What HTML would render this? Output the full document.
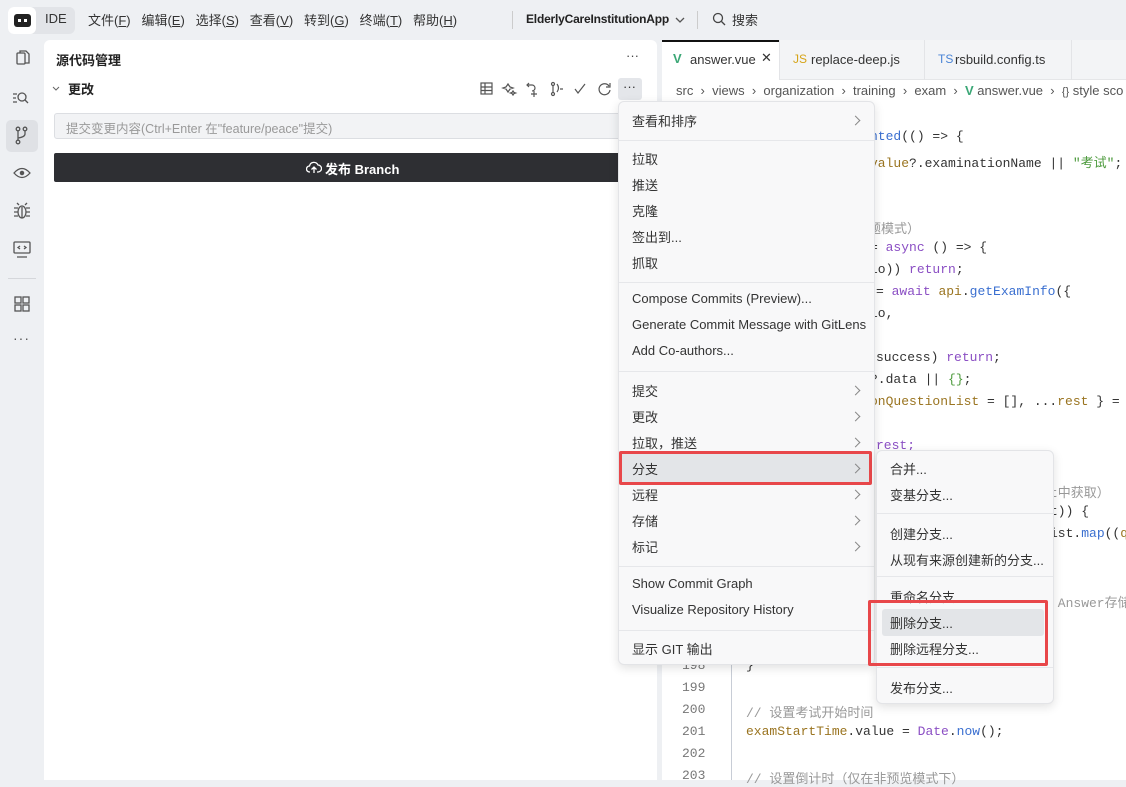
<!DOCTYPE html>
<html><head><meta charset="utf-8"><style>
*{margin:0;padding:0;box-sizing:border-box}
body{width:1126px;height:780px;overflow:hidden;background:#eef0f3;font-family:"Liberation Sans","Noto Sans CJK SC",sans-serif;font-size:13px;color:#333;position:relative}
.a{position:absolute;white-space:pre}
.code{font-family:"Liberation Mono","Noto Sans CJK SC",monospace;font-size:13px;color:#333}
.k{color:#8b4fc4}.f{color:#3a6fd0}.s{color:#4c9a3c}.v{color:#9a7420}.c{color:#999}.n{color:#777}
.menu{position:absolute;background:#f8f8f9;border:1px solid #e3e4e7;border-radius:6px;box-shadow:0 3px 10px rgba(0,0,0,.12)}
.mi{position:absolute;left:13px;font-size:13px;color:#333;white-space:pre;margin-top:-2px}
.ar{position:absolute;width:7px;height:7px;border-right:1.3px solid #888;border-top:1.3px solid #888;transform:rotate(45deg)}
.sep{position:absolute;left:0;right:0;height:1px;background:#e6e7ea}
.ic{position:absolute}
</style></head><body>
<!-- top bar -->
<div class="a" style="left:8px;top:7px;width:67px;height:27px;background:#e2e4e8;border-radius:6px"></div>
<div class="a" style="left:8px;top:7px;width:28px;height:27px;background:#fff;border-radius:6px"></div>
<div class="a" style="left:14px;top:14px;width:17px;height:13px;background:#222;border-radius:3px"></div>
<div class="a" style="left:18px;top:19px;width:3px;height:3px;background:#fff"></div>
<div class="a" style="left:24px;top:19px;width:3px;height:3px;background:#fff"></div>
<div class="a" style="left:45px;top:11px;font-size:13px">IDE</div>
<div class="a" style="left:88px;top:10px">文件(<u>F</u>)&nbsp;&nbsp;&nbsp;编辑(<u>E</u>)&nbsp;&nbsp;&nbsp;选择(<u>S</u>)&nbsp;&nbsp;&nbsp;查看(<u>V</u>)&nbsp;&nbsp;&nbsp;转到(<u>G</u>)&nbsp;&nbsp;&nbsp;终端(<u>T</u>)&nbsp;&nbsp;&nbsp;帮助(<u>H</u>)</div>
<div class="a" style="left:512px;top:11px;width:1px;height:18px;background:#ccc"></div>
<div class="a" style="left:526px;top:12px;font-size:12px;font-weight:bold;color:#222;letter-spacing:-0.2px">ElderlyCareInstitutionApp</div>
<svg class="ic" style="left:675px;top:16px" width="10" height="8"><path d="M1 2l4 4 4-4" stroke="#555" fill="none" stroke-width="1.3"/></svg>
<div class="a" style="left:697px;top:11px;width:1px;height:18px;background:#ccc"></div>
<svg class="ic" style="left:712px;top:12px" width="14" height="14"><circle cx="6" cy="6" r="4.5" stroke="#444" fill="none" stroke-width="1.3"/><path d="M9.5 9.5l3.5 3.5" stroke="#444" stroke-width="1.3"/></svg>
<div class="a" style="left:732px;top:10px">搜索</div>

<!-- activity bar icons -->
<div class="a" style="left:6px;top:120px;width:32px;height:32px;background:#dfe1e5;border-radius:5px"></div>
<svg class="ic" style="left:12px;top:50px" width="20" height="310" fill="none" stroke="#555" stroke-width="1.3">
<rect x="5" y="3" width="8" height="11" rx="1"/><path d="M8 3V1h6l3 3v9h-4"/>
<path d="M1 44h4M1 48h3M1 52h4"/><circle cx="10" cy="47" r="4"/><path d="M13 50l3 3"/>
<circle cx="6" cy="79" r="1.8"/><circle cx="13" cy="79" r="1.8"/><circle cx="6" cy="92" r="1.8"/><path d="M6 81v9M13 81v3q0 3-7 4"/>
<path d="M2 123q8-9 16 0q-8 9-16 0z"/><circle cx="10" cy="123" r="1.6" fill="#555"/>
<ellipse cx="10" cy="162" rx="4" ry="6"/><path d="M7 155l-2-2M13 155l2-2M2 158h4M14 158h4M2 162h4M14 162h4M2 166h4M14 166h4M10 157v11"/>
<rect x="2" y="192" width="16" height="11" rx="1"/><path d="M5 207h10M8 196l-2 1.5 2 1.5M12 196l2 1.5-2 1.5"/>
<rect x="3" y="247" width="6" height="6"/><rect x="11" y="247" width="6" height="6"/><rect x="3" y="255" width="6" height="6"/><rect x="11" y="255" width="6" height="6"/>
</svg>
<div class="a" style="left:8px;top:278px;width:28px;height:1px;background:#d5d7db"></div>
<div class="a" style="left:13px;top:330px;color:#555;font-size:14px;letter-spacing:1px">···</div>

<!-- side panel -->
<div class="a" style="left:44px;top:40px;width:613px;height:740px;background:#fff;border-radius:6px 6px 0 0"></div>
<div class="a" style="left:56px;top:50px;font-weight:bold;font-size:13px;color:#222">源代码管理</div>
<div class="a" style="left:626px;top:48px;color:#444;font-size:13px">···</div>
<svg class="ic" style="left:52px;top:86px" width="8" height="6"><path d="M1 1l3 3 3-3" stroke="#666" fill="none"/></svg>
<div class="a" style="left:68px;top:79px;font-size:13px;color:#222;font-weight:bold">更改</div>
<svg class="ic" style="left:479px;top:81px" width="135" height="16" fill="none" stroke="#555" stroke-width="1.2">
<rect x="2" y="2" width="11" height="11"/><path d="M2 6h11M2 9.5h11M6 2v11"/>
<path d="M29 3l2 3 3 1-3 1-2 3-2-3-3-1 3-1z M34 10l1 1.5 1.5.5-1.5.5-1 1.5-1-1.5-1.5-.5 1.5-.5z"/>
<path d="M48 4h5a3 3 0 0 1 0 6M50 2l-2 2 2 2M55 10v6M52 13h6"/>
<circle cx="74" cy="3" r="1.5"/><circle cx="74" cy="13" r="1.5"/><path d="M74 5v6M78 3q3 4 0 8M81 8h3"/>
<path d="M96 8l3 4 7-9"/>
<path d="M130 5a5.5 5.5 0 1 0 1 4M131 2v4h-4"/>
</svg>
<div class="a" style="left:618px;top:78px;width:24px;height:22px;background:#e4e6ea;border-radius:3px"></div>
<div class="a" style="left:623px;top:79px;color:#333">···</div>
<div class="a" style="left:54px;top:113px;width:590px;height:26px;background:#f2f3f5;border:1px solid #dcdee2;border-radius:3px"></div>
<div class="a" style="left:66px;top:118px;color:#999;font-size:12.5px">提交变更内容(Ctrl+Enter 在"feature/peace"提交)</div>
<div class="a" style="left:54px;top:153px;width:590px;height:29px;background:#2e2f33;border-radius:2px"></div>
<svg class="ic" style="left:306px;top:161px" width="16" height="13" fill="none" stroke="#fff" stroke-width="1.3"><path d="M4 11H3.5a3 3 0 0 1 0-6 4.5 4.5 0 0 1 8.5-1 3.5 3.5 0 0 1 0 7H11M8 12V6M5.5 8.5L8 6l2.5 2.5"/></svg>
<div class="a" style="left:325px;top:159px;color:#fff;font-weight:bold;font-size:13px">发布 Branch</div>

<!-- editor -->
<div class="a" style="left:662px;top:40px;width:464px;height:740px;background:#fff"></div>
<div class="a" style="left:779px;top:40px;width:347px;height:40px;background:#f3f4f6;border-bottom:1px solid #e5e6e8"></div>
<div class="a" style="left:779px;top:40px;width:1px;height:40px;background:#e3e4e7"></div>
<div class="a" style="left:924px;top:40px;width:1px;height:40px;background:#e3e4e7"></div>
<div class="a" style="left:1071px;top:40px;width:1px;height:40px;background:#e3e4e7"></div>
<div class="a" style="left:662px;top:40px;width:117px;height:2px;background:#111"></div>
<div class="a" style="left:673px;top:51px;color:#3ba776;font-weight:bold">V</div>
<div class="a" style="left:690px;top:52px;color:#333">answer.vue</div>
<div class="a" style="left:761px;top:50px;color:#333">✕</div>
<div class="a" style="left:793px;top:52px;color:#d6a418;font-size:12px">JS</div>
<div class="a" style="left:811px;top:52px;color:#333">replace-deep.js</div>
<div class="a" style="left:938px;top:52px;color:#4a84d6;font-size:12px">TS</div>
<div class="a" style="left:955px;top:52px;color:#333">rsbuild.config.ts</div>
<div class="a" style="left:676px;top:83px;color:#555">src  ›  views  ›  organization  ›  training  ›  exam  ›  <span style="color:#3ba776;font-weight:bold">V</span> answer.vue  ›  <span style="font-size:11px">{}</span> style sco</div>

<div class="a code" style="left:870px;top:129px"><span class="f">nted</span>(() =&gt; {</div>
<div class="a code" style="left:870px;top:152px"><span class="v">value</span>?.examinationName || <span class="s">"考试"</span>;</div>
<div class="a code c" style="left:868px;top:218px">题模式）</div>
<div class="a code" style="left:870px;top:240px">= <span class="k">async</span> () =&gt; {</div>
<div class="a code" style="left:870px;top:262px">lo)) <span class="k">return</span>;</div>
<div class="a code" style="left:876px;top:284px">= <span class="k">await</span> <span class="v">api</span>.<span class="f">getExamInfo</span>({</div>
<div class="a code" style="left:870px;top:306px">lo,</div>
<div class="a code" style="left:876px;top:350px">success) <span class="k">return</span>;</div>
<div class="a code" style="left:870px;top:372px">?.data || <span class="s">{}</span>;</div>
<div class="a code" style="left:870px;top:394px"><span class="v">onQuestionList</span> = [], ...<span class="v">rest</span> } =</div>
<div class="a code k" style="left:876px;top:438px">rest;</div>
<div class="a code c" style="left:1050px;top:482px">t中获取）</div>
<div class="a code" style="left:1050px;top:504px">t)) {</div>
<div class="a code" style="left:1050px;top:526px">ist.<span class="f">map</span>((<span class="v">q</span></div>
<div class="a code c" style="left:1050px;top:592px"> Answer存储</div>
<div class="a" style="left:731px;top:660px;width:1px;height:120px;background:#c8cdd6"></div>
<div class="a code n" style="left:682px;top:658px">198</div>
<div class="a code" style="left:746px;top:658px">}</div>
<div class="a code n" style="left:682px;top:680px">199</div>
<div class="a code n" style="left:682px;top:702px">200</div>
<div class="a code c" style="left:746px;top:702px">// 设置考试开始时间</div>
<div class="a code n" style="left:682px;top:724px">201</div>
<div class="a code" style="left:746px;top:724px"><span class="v">examStartTime</span>.value = <span class="k">Date</span>.<span class="f">now</span>();</div>
<div class="a code n" style="left:682px;top:746px">202</div>
<div class="a code n" style="left:682px;top:768px">203</div>
<div class="a code c" style="left:746px;top:768px">// 设置倒计时（仅在非预览模式下）</div>

<!-- main menu -->
<div class="menu" style="left:618px;top:101px;width:257px;height:564px">
<div class="mi" style="top:11px">查看和排序</div><div class="ar" style="left:233px;top:15px"></div>
<div class="sep" style="top:38px"></div>
<div class="mi" style="top:49px">拉取</div>
<div class="mi" style="top:75px">推送</div>
<div class="mi" style="top:101px">克隆</div>
<div class="mi" style="top:127px">签出到...</div>
<div class="mi" style="top:153px">抓取</div>
<div class="sep" style="top:180px"></div>
<div class="mi" style="top:191px">Compose Commits (Preview)...</div>
<div class="mi" style="top:217px">Generate Commit Message with GitLens</div>
<div class="mi" style="top:243px">Add Co-authors...</div>
<div class="sep" style="top:269px"></div>
<div class="mi" style="top:281px">提交</div><div class="ar" style="left:233px;top:285px"></div>
<div class="mi" style="top:307px">更改</div><div class="ar" style="left:233px;top:311px"></div>
<div class="mi" style="top:333px">拉取，推送</div><div class="ar" style="left:233px;top:337px"></div>
<div style="position:absolute;left:2px;top:351px;width:251px;height:30px;background:#e3e5e8"></div>
<div class="mi" style="top:359px">分支</div><div class="ar" style="left:233px;top:363px"></div>
<div class="mi" style="top:385px">远程</div><div class="ar" style="left:233px;top:389px"></div>
<div class="mi" style="top:411px">存储</div><div class="ar" style="left:233px;top:415px"></div>
<div class="mi" style="top:437px">标记</div><div class="ar" style="left:233px;top:441px"></div>
<div class="sep" style="top:464px"></div>
<div class="mi" style="top:476px">Show Commit Graph</div>
<div class="mi" style="top:502px">Visualize Repository History</div>
<div class="sep" style="top:528px"></div>
<div class="mi" style="top:539px">显示 GIT 输出</div>
</div>
<div class="a" style="left:619px;top:451px;width:253px;height:34px;border:3px solid #e8474a;border-radius:2px"></div>

<!-- submenu -->
<div class="menu" style="left:876px;top:450px;width:178px;height:254px">
<div class="mi" style="top:10px">合并...</div>
<div class="mi" style="top:36px">变基分支...</div>
<div class="sep" style="top:62px"></div>
<div class="mi" style="top:75px">创建分支...</div>
<div class="mi" style="top:101px">从现有来源创建新的分支...</div>
<div class="sep" style="top:125px"></div>
<div class="mi" style="top:138px">重命名分支...</div>
<div style="position:absolute;left:5px;top:158px;width:162px;height:27px;background:#e3e5e8;border-radius:3px"></div>
<div class="mi" style="top:164px">删除分支...</div>
<div class="mi" style="top:190px">删除远程分支...</div>
<div class="sep" style="top:216px"></div>
<div class="mi" style="top:229px">发布分支...</div>
</div>
<div class="a" style="left:868px;top:600px;width:180px;height:66px;border:3px solid #e8474a;border-radius:2px"></div>
</body></html>
